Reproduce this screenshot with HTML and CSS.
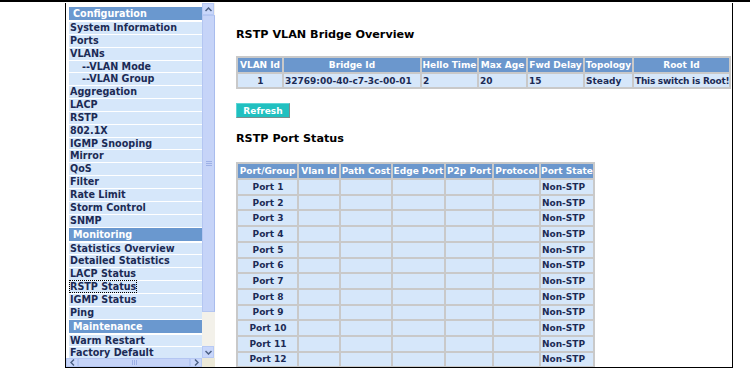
FILE: index.html
```html
<!DOCTYPE html>
<html lang="en">
<head>
    <meta charset="UTF-8">
    <title>RSTP Status</title>
    <link rel="stylesheet" href="styles.css">
</head>
<body>
    <div class="topline"></div>
    <div class="frame">
        <div class="menu">
            <div class="menu-list">
                <div class="menu-head">Configuration</div>
                <div class="menu-item">System Information</div>
                <div class="menu-item">Ports</div>
                <div class="menu-item">VLANs</div>
                <div class="menu-item sub">--VLAN Mode</div>
                <div class="menu-item sub">--VLAN Group</div>
                <div class="menu-item">Aggregation</div>
                <div class="menu-item">LACP</div>
                <div class="menu-item">RSTP</div>
                <div class="menu-item">802.1X</div>
                <div class="menu-item">IGMP Snooping</div>
                <div class="menu-item">Mirror</div>
                <div class="menu-item">QoS</div>
                <div class="menu-item">Filter</div>
                <div class="menu-item">Rate Limit</div>
                <div class="menu-item">Storm Control</div>
                <div class="menu-item">SNMP</div>
                <div class="menu-head">Monitoring</div>
                <div class="menu-item">Statistics Overview</div>
                <div class="menu-item">Detailed Statistics</div>
                <div class="menu-item">LACP Status</div>
                <div class="menu-item"><span class="focus">RSTP Status</span></div>
                <div class="menu-item">IGMP Status</div>
                <div class="menu-item">Ping</div>
                <div class="menu-head">Maintenance</div>
                <div class="menu-item">Warm Restart</div>
                <div class="menu-item">Factory Default</div>
            </div>

            <!-- fake XP scrollbars -->
            <div class="vscroll">
                <div class="sb-btn">
                    <svg width="7" height="5" viewBox="0 0 7 5"><polyline points="0.5,4 3.5,1 6.5,4" fill="none" stroke="#4d6185" stroke-width="1.5"/></svg>
                </div>
                <div class="vthumb">
                    <svg width="6" height="5" viewBox="0 0 6 5"><path d="M0 0.5H6M0 2.5H6M0 4.5H6" stroke="#9db0e6" stroke-width="1"/></svg>
                </div>
                <div class="vtrack"></div>
                <div class="sb-btn">
                    <svg width="7" height="5" viewBox="0 0 7 5"><polyline points="0.5,1 3.5,4 6.5,1" fill="none" stroke="#4d6185" stroke-width="1.5"/></svg>
                </div>
            </div>
            <div class="hscroll">
                <div class="sb-btn">
                    <svg width="5" height="7" viewBox="0 0 5 7"><polyline points="4,0.5 1,3.5 4,6.5" fill="none" stroke="#4d6185" stroke-width="1.5"/></svg>
                </div>
                <div class="hthumb">
                    <svg width="5" height="5" viewBox="0 0 5 5"><path d="M0.5 0V5M2.5 0V5M4.5 0V5" stroke="#9db0e6" stroke-width="1"/></svg>
                </div>
                <div class="sb-btn">
                    <svg width="5" height="7" viewBox="0 0 5 7"><polyline points="1,0.5 4,3.5 1,6.5" fill="none" stroke="#4d6185" stroke-width="1.5"/></svg>
                </div>
            </div>
            <div class="sb-corner"></div>
        </div>

        <div class="main">
            <h2 class="title">RSTP VLAN Bridge Overview</h2>
            <table class="grid vlan">
                <colgroup>
                    <col class="w44"><col class="w136"><col class="w55"><col class="w47"><col class="w55"><col class="w47"><col class="w95">
                </colgroup>
                <tr>
                    <th>VLAN Id</th><th>Bridge Id</th><th>Hello Time</th><th>Max Age</th><th>Fwd Delay</th><th>Topology</th><th>Root Id</th>
                </tr>
                <tr>
                    <td class="center">1</td><td>32769:00-40-c7-3c-00-01</td><td>2</td><td>20</td><td>15</td><td>Steady</td><td class="tight">This switch is Root!</td>
                </tr>
            </table>

            <button class="refresh">Refresh</button>

            <h2 class="title">RSTP Port Status</h2>
            <table class="grid ports">
                <colgroup>
                    <col class="w59"><col class="w40"><col class="w50"><col class="w51"><col class="w46"><col class="w45"><col class="w52">
                </colgroup>
                <tr>
                    <th>Port/Group</th><th>Vlan Id</th><th>Path Cost</th><th>Edge Port</th><th>P2p Port</th><th>Protocol</th><th>Port State</th>
                </tr>
                <tr><td class="center">Port 1</td><td></td><td></td><td></td><td></td><td></td><td>Non-STP</td></tr>
                <tr><td class="center">Port 2</td><td></td><td></td><td></td><td></td><td></td><td>Non-STP</td></tr>
                <tr><td class="center">Port 3</td><td></td><td></td><td></td><td></td><td></td><td>Non-STP</td></tr>
                <tr><td class="center">Port 4</td><td></td><td></td><td></td><td></td><td></td><td>Non-STP</td></tr>
                <tr><td class="center">Port 5</td><td></td><td></td><td></td><td></td><td></td><td>Non-STP</td></tr>
                <tr><td class="center">Port 6</td><td></td><td></td><td></td><td></td><td></td><td>Non-STP</td></tr>
                <tr><td class="center">Port 7</td><td></td><td></td><td></td><td></td><td></td><td>Non-STP</td></tr>
                <tr><td class="center">Port 8</td><td></td><td></td><td></td><td></td><td></td><td>Non-STP</td></tr>
                <tr><td class="center">Port 9</td><td></td><td></td><td></td><td></td><td></td><td>Non-STP</td></tr>
                <tr><td class="center">Port 10</td><td></td><td></td><td></td><td></td><td></td><td>Non-STP</td></tr>
                <tr><td class="center">Port 11</td><td></td><td></td><td></td><td></td><td></td><td>Non-STP</td></tr>
                <tr><td class="center">Port 12</td><td></td><td></td><td></td><td></td><td></td><td>Non-STP</td></tr>
            </table>
        </div>
    </div>
</body>
</html>
```

FILE: styles.css
```css
body {
    margin: 0;
    background: #fff;
    font-family: "DejaVu Sans", Verdana, sans-serif;
    color: #1c2b55;
}
.topline {
    height: 2px;
    background: #000;
}
.frame {
    display: flex;
    margin: 1px 0 0 65px;
    width: 666px;
    height: 364px;
    border: 1px solid #000;
    border-top: none;
    overflow: hidden;
}

/* left menu */
.menu {
    display: grid;
    grid-template-columns: 136px 13px;
    grid-template-rows: 355px 9px;
    flex: none;
}
.menu-list {
    padding: 3px 0 0 3px;
    overflow: hidden;
}
.menu-head {
    height: 13px;
    line-height: 13px;
    margin: 1px 0 2px;
    padding-left: 4px;
    background: #6a98cf;
    color: #fff;
    font-size: 9.6px;
    font-weight: bold;
}
.menu-item {
    height: 11.85px;
    line-height: 12px;
    margin-bottom: 1px;
    padding-left: 1px;
    background: #d6e7fa;
    font-size: 9.6px;
    font-weight: bold;
    white-space: nowrap;
}
.menu-item.sub {
    padding-left: 13px;
}
.focus {
    outline: 1px dotted #000;
}

/* scrollbars */
.vscroll {
    display: flex;
    flex-direction: column;
    background: #f3f1ea;
}
.hscroll {
    display: flex;
    background: #f3f1ea;
}
.sb-btn {
    display: flex;
    align-items: center;
    justify-content: center;
    flex: none;
    width: 12px;
    height: 12px;
    background: #c9d7fb;
    border: 1px solid #b7c9f4;
    box-sizing: border-box;
}
.hscroll .sb-btn {
    height: 9px;
}
.vthumb {
    display: flex;
    align-items: center;
    justify-content: center;
    height: 295px;
    background: #c6d4f8;
    border: 1px solid #b4c6f2;
    border-right-color: #a9bced;
}
.vtrack {
    flex: 1;
}
.hthumb {
    display: flex;
    align-items: center;
    justify-content: center;
    flex: 1;
    background: #c6d4f8;
    border: 1px solid #b4c6f2;
}
.sb-corner {
    background: #ece9d8;
}

/* content */
.main {
    flex: 1;
    padding: 25px 0 0 21px;
    overflow: hidden;
}
.title {
    margin: 0 0 15px;
    font-size: 11.2px;
    line-height: 13px;
    color: #000;
}
.grid {
    table-layout: fixed;
    border-collapse: separate;
    border-spacing: 2px;
    background: #c9c9c9;
}
.vlan {
    width: 495px;
}
.ports {
    width: 359px;
    margin-top: 17px;
}
.grid th,
.grid td {
    height: 13.7px;
    padding: 0 0 0 1px;
    font-size: 9px;
    line-height: 12px;
    font-weight: bold;
    white-space: nowrap;
    overflow: hidden;
}
.grid th {
    padding: 0;
    background: #6b97cd;
    color: #fff;
    text-align: center;
}
.grid td {
    background: #d6e7fa;
    text-align: left;
}
.grid td.center {
    text-align: center;
}
.grid td.tight {
    letter-spacing: -0.25px;
}
.w40 { width: 40px; }
.w44 { width: 44px; }
.w45 { width: 45px; }
.w46 { width: 46px; }
.w47 { width: 47px; }
.w50 { width: 50px; }
.w51 { width: 51px; }
.w52 { width: 52px; }
.w55 { width: 55px; }
.w59 { width: 59px; }
.w95 { width: 95px; }
.w136 { width: 136px; }

.refresh {
    display: block;
    width: 54px;
    height: 15px;
    margin: 14px 0 14px;
    padding: 0;
    background: #21c0c0;
    color: #fff;
    font-family: "DejaVu Sans", Verdana, sans-serif;
    font-size: 9px;
    font-weight: bold;
    border: 1px solid;
    border-color: #5cd6d6 #7c8c8c #7c8c8c #5cd6d6;
}
```
